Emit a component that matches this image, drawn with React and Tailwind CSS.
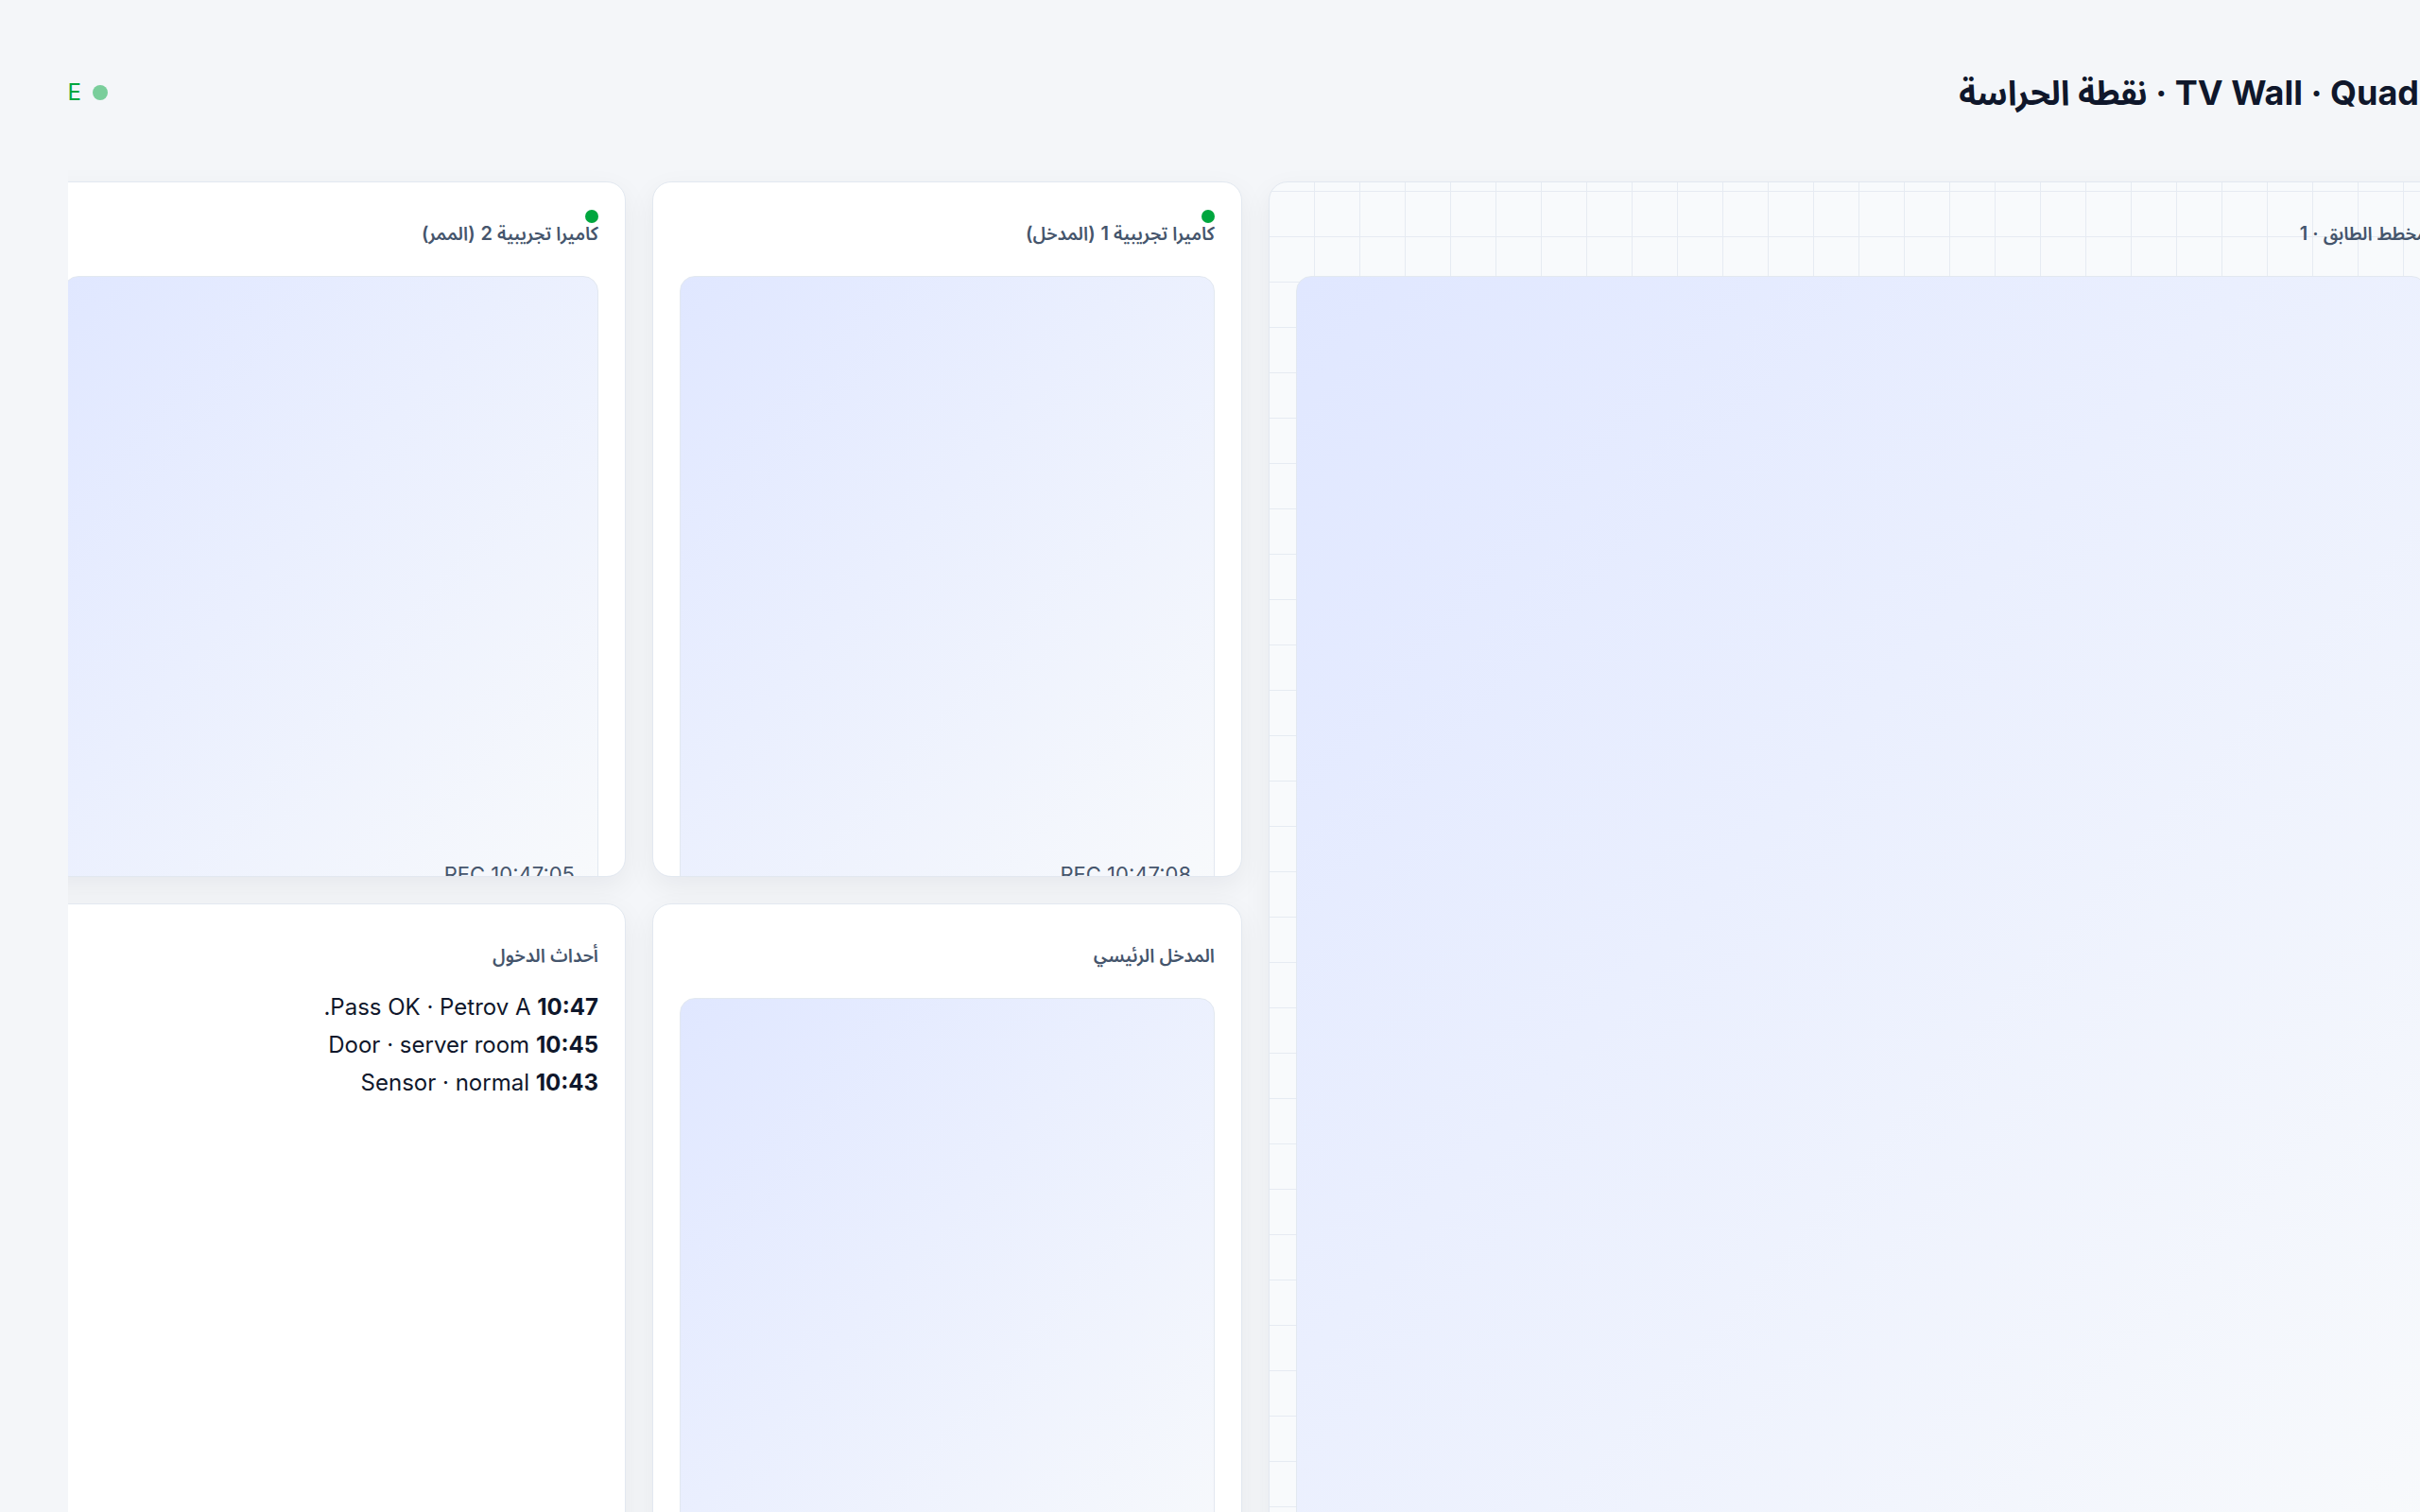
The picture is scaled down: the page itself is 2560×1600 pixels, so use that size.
import React from 'react';

const events = [
  { time: '10:47', text: 'Pass OK · Petrov A.' },
  { time: '10:45', text: 'Door · server room' },
  { time: '10:43', text: 'Sensor · normal' },
];

const Tile = ({ title, note, live, className = 'bg-white', children }) => (
  <div className={`relative flex flex-col overflow-hidden rounded-[20px] border border-[#e2e8f0] p-7 shadow-[0_10px_30px_rgba(15,23,42,0.06)] ${className}`}>
    <div className="relative flex h-[52px] shrink-0 items-center">
      {live && <span className="absolute right-0 top-px h-3.5 w-3.5 rounded-full bg-green-600" />}
      <h3 className="font-['Inter','Noto_Sans_Arabic_UI',sans-serif] text-xl font-semibold text-slate-600 [font-stretch:semi-condensed]">
        {title}
        {note && <span className="mr-1.5">{note}</span>}
      </h3>
    </div>
    {children}
  </div>
);

const Feed = ({ rec }) => (
  <div className="relative mt-[19px] h-[664px] shrink-0 rounded-2xl border border-[#e2e8f0] bg-linear-to-br from-indigo-100 to-slate-50">
    {rec && (
      <span dir="ltr" className="absolute bottom-[16px] right-[24px] text-[22px] leading-7 text-slate-600">
        REC {rec}
      </span>
    )}
  </div>
);

export default function App() {
  return (
    <div className="h-screen w-full overflow-hidden bg-[#f4f6f9] font-['Inter',sans-serif]">
      <div dir="rtl" className="ml-[72px] h-full overflow-hidden">
        <div className="-mr-[36px] w-[2558px] pt-[78px]">
          <header className="flex h-10 items-center justify-between pr-[37px]">
            <h1 dir="ltr" className="font-['Inter','Noto_Sans_Arabic_UI',sans-serif] text-4xl font-bold text-slate-900 [font-stretch:semi-condensed]">
              نقطة الحراسة · TV Wall · Quad
            </h1>
            <div className="-ml-[3px] flex items-center gap-3">
              <span className="h-4 w-4 rounded-full bg-green-600/50" />
              <span className="text-2xl text-green-600">LIVE</span>
            </div>
          </header>

          <div className="mt-[74px] grid grid-cols-[1254px_624px_624px] grid-rows-[736px_736px] gap-7">
            <Tile
              title="مخطط الطابق · 1"
              className="row-span-2 bg-[#f8fafc] bg-[image:linear-gradient(to_right,#e6ebf2_1px,transparent_1px),linear-gradient(to_bottom,#e6ebf2_1px,transparent_1px)] bg-[size:48px_48px] bg-[position:47px_9px]"
            >
              <div className="mt-[19px] flex-1 rounded-2xl border border-[#e2e8f0] bg-linear-to-br from-indigo-100 to-slate-50" />
            </Tile>

            <Tile title="كاميرا تجريبية 1" note="(المدخل)" live>
              <Feed rec="10:47:08" />
            </Tile>

            <Tile title="كاميرا تجريبية 2" note="(الممر)" live>
              <Feed rec="10:47:05" />
            </Tile>

            <Tile title="المدخل الرئيسي">
              <Feed />
            </Tile>

            <Tile title="أحداث الدخول">
              <ul className="mt-[9px] text-2xl leading-10 text-slate-900">
                {events.map((e) => (
                  <li key={e.time}>
                    <b className="font-bold">{e.time}</b> {e.text}
                  </li>
                ))}
              </ul>
            </Tile>
          </div>
        </div>
      </div>
    </div>
  );
}
